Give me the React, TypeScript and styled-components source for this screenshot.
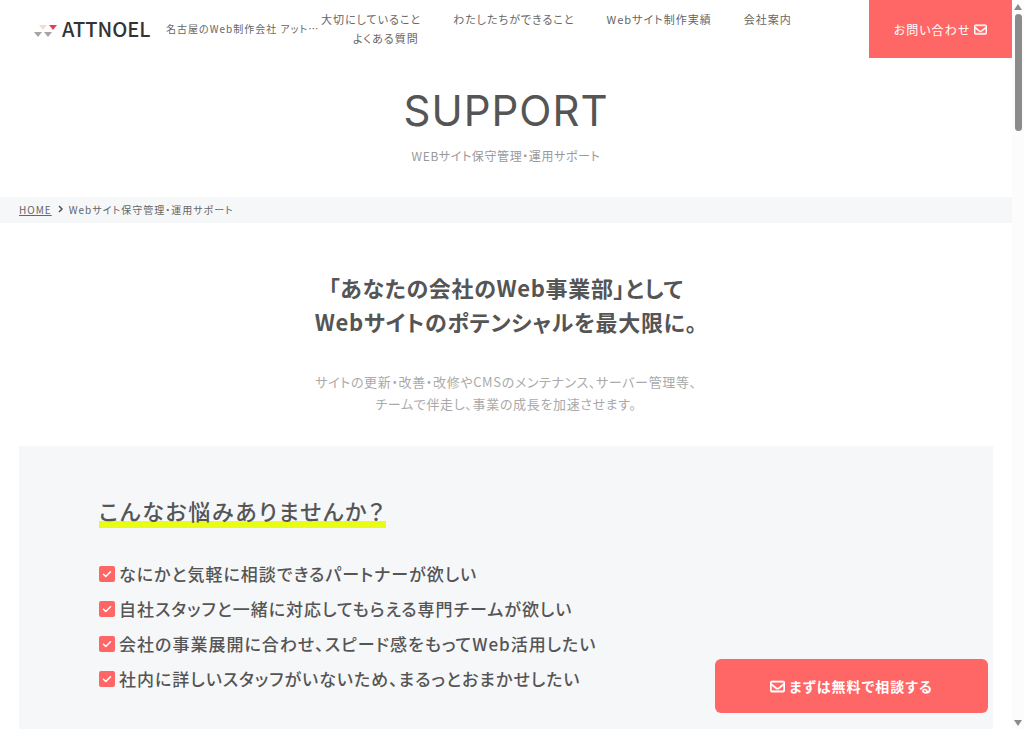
import React from "react";
import styled, { createGlobalStyle } from "styled-components";

const GlobalStyle = createGlobalStyle`
  *, *::before, *::after { box-sizing: border-box; }
  html, body, #root { height: 100%; }
  body {
    margin: 0;
    background: #fff;
    color: #555;
    font-family: "Noto Sans CJK JP", sans-serif;
    font-feature-settings: "palt";
    letter-spacing: 1px;
  }
  h1, h2, h3, p, ul { margin: 0; padding: 0; }
  ul { list-style: none; }
  a { color: inherit; text-decoration: none; }
`;

const Shell = styled.div`
  display: flex;
  height: 100vh;
`;

const Viewport = styled.div`
  flex: 1;
  min-width: 0;
  overflow-y: auto;
  scrollbar-width: none;
`;

const Rail = styled.div`
  flex: none;
  width: 12px;
  display: flex;
  flex-direction: column;
  align-items: center;
  justify-content: space-between;
  padding: 4px 0 3px;
  background: #fcfcfc;
`;

const RailTop = styled.div`
  display: flex;
  flex-direction: column;
  align-items: center;
  gap: 4px;
`;

const Arrow = styled.svg`
  display: block;
  width: 8px;
  height: 6px;
  fill: #8b8b8b;
`;

const Thumb = styled.div`
  width: 7px;
  height: 117px;
  border-radius: 4px;
  background: #8b8b8b;
`;

const Header = styled.header`
  display: flex;
  align-items: center;
  height: 58px;
  padding-left: 34px;
`;

const Brand = styled.a`
  flex: none;
  display: flex;
  align-items: center;
  width: 132px;
  color: #333;
`;

const LogoMark = styled.svg`
  flex: none;
  width: 24px;
  height: 14px;
  margin: 6px 4px 0 0;
`;

const LogoName = styled.span`
  font-size: 20px;
  font-weight: 500;
  line-height: 28px;
  letter-spacing: 0;
`;

const Tagline = styled.p`
  flex: none;
  width: 155px;
  overflow: hidden;
  white-space: nowrap;
  text-overflow: ellipsis;
  font-size: 10px;
  line-height: 18px;
  color: #666;
`;

const Nav = styled.nav`
  flex: 1;
  min-width: 0;
`;

const NavList = styled.ul`
  display: flex;
  flex-wrap: wrap;
`;

const NavItem = styled.li`
  font-size: 11px;
  line-height: 19px;
  color: #666;
  & + & { margin-left: 32px; }
`;

const ContactLink = styled.a`
  flex: none;
  align-self: stretch;
  display: flex;
  align-items: center;
  justify-content: center;
  gap: 4px;
  width: 143px;
  background: #ff6767;
  color: #fff;
  font-size: 12px;
`;

const MailIcon = styled.svg`
  flex: none;
  width: ${(p: { $size: number }) => p.$size}px;
  height: ${(p: { $size: number }) => p.$size}px;
  fill: currentColor;
  stroke: currentColor;
  stroke-width: 18;
`;

const Hero = styled.section`
  padding: 28px 0 31px;
  text-align: center;
`;

const HeroTitle = styled.h1`
  font: 400 42px/50px Inter, sans-serif;
  letter-spacing: 1px;
`;

const HeroSub = styled.p`
  margin-top: 10px;
  font-size: 12px;
  line-height: 20px;
  letter-spacing: 0.05em;
  color: #999;
`;

const Breadcrumb = styled.nav`
  display: flex;
  align-items: center;
  gap: 5px;
  height: 26px;
  padding: 0 19px 2px;
  background: #f5f7f9;
  font-size: 10px;
  color: #666;
  a { text-decoration: underline; }
  svg { width: 7px; height: 8px; fill: none; stroke: #555; stroke-width: 1.5; }
`;

const Intro = styled.section`
  padding: 47px 19px 31px;
  text-align: center;
`;

const IntroTitle = styled.h2`
  font-size: 22px;
  font-weight: 700;
  line-height: 34px;
  letter-spacing: 0.03em;
`;

const IntroText = styled.p`
  margin-top: 33px;
  font-size: 13px;
  line-height: 22px;
  letter-spacing: 0.05em;
  color: #aaa;
`;

const Panel = styled.section`
  margin: 0 19px;
  padding: 48px 80px 80px;
  background: #f5f7f9;
`;

const PanelTitle = styled.h3`
  display: inline-block;
  padding-bottom: 2px;
  font-size: 22px;
  font-weight: 500;
  line-height: 32px;
  letter-spacing: 0.08em;
  background: linear-gradient(#e8fc16, #e8fc16) 0 100% / 100% 7px no-repeat;
`;

const CheckList = styled.ul`
  display: grid;
  gap: 7px;
  margin-top: 32px;
`;

const CheckItem = styled.li`
  display: flex;
  align-items: center;
  gap: 4px;
  font-size: 17px;
  font-weight: 500;
  line-height: 28px;
`;

const CheckIcon = styled.svg`
  flex: none;
  width: 16px;
  height: 16px;
`;

const FloatingCta = styled.a`
  position: fixed;
  right: 36px;
  bottom: 16px;
  display: flex;
  align-items: center;
  justify-content: center;
  gap: 4px;
  width: 273px;
  height: 54px;
  border-radius: 6px;
  background: #ff6767;
  color: #fff;
  font-size: 14px;
  font-weight: 700;
`;

function Mail({ size }: { size: number }) {
  return (
    <MailIcon $size={size} viewBox="0 0 512 512" aria-hidden="true">
      <path d="M64 112c-8.800 0-16 7.200-16 16v22.100L220.500 291.700c20.700 17 50.400 17 71.100 0L464 150.100V128c0-8.800-7.200-16-16-16H64zM48 212.200V384c0 8.800 7.200 16 16 16H448c8.800 0 16-7.200 16-16V212.200L322 328.800c-38.400 31.500-93.700 31.500-132 0L48 212.200zM0 128C0 92.700 28.700 64 64 64H448c35.300 0 64 28.700 64 64V384c0 35.300-28.700 64-64 64H64c-35.300 0-64-28.700-64-64V128z" />
    </MailIcon>
  );
}

const navItems = ["大切にしていること", "わたしたちができること", "Webサイト制作実績", "会社案内", "よくある質問"];

const worries = [
  "なにかと気軽に相談できるパートナーが欲しい",
  "自社スタッフと一緒に対応してもらえる専門チームが欲しい",
  "会社の事業展開に合わせ、スピード感をもってWeb活用したい",
  "社内に詳しいスタッフがいないため、まるっとおまかせしたい",
];

export default function App() {
  return (
    <>
      <GlobalStyle />
      <Shell>
        <Viewport>
          <Header>
            <Brand href="#">
              <LogoMark viewBox="0 0 24 14" aria-hidden="true">
                <path fill="#fbd9d3" d="M5 0h8L9 5z" />
                <path fill="#e5404f" d="M15 0h8l-4 5z" />
                <path fill="#a5a5a5" d="M0 7h8l-4 5zM10 7h8l-4 5z" />
              </LogoMark>
              <LogoName>ATTNOEL</LogoName>
            </Brand>
            <Tagline>名古屋のWeb制作会社 アットノエル</Tagline>
            <Nav>
              <NavList>
                {navItems.map((item) => (
                  <NavItem key={item}>
                    <a href="#">{item}</a>
                  </NavItem>
                ))}
              </NavList>
            </Nav>
            <ContactLink href="#">
              お問い合わせ
              <Mail size={13} />
            </ContactLink>
          </Header>
          <main>
            <Hero>
              <HeroTitle>SUPPORT</HeroTitle>
              <HeroSub>WEBサイト保守管理・運用サポート</HeroSub>
            </Hero>
            <Breadcrumb>
              <a href="#">HOME</a>
              <svg viewBox="0 0 7 8" aria-hidden="true">
                <path d="M2 1l3 3-3 3" />
              </svg>
              <span>Webサイト保守管理・運用サポート</span>
            </Breadcrumb>
            <Intro>
              <IntroTitle>
                「あなたの会社のWeb事業部」として
                <br />
                Webサイトのポテンシャルを最大限に。
              </IntroTitle>
              <IntroText>
                サイトの更新・改善・改修やCMSのメンテナンス、サーバー管理等、
                <br />
                チームで伴走し、事業の成長を加速させます。
              </IntroText>
            </Intro>
            <Panel>
              <PanelTitle>こんなお悩みありませんか？</PanelTitle>
              <CheckList>
                {worries.map((text) => (
                  <CheckItem key={text}>
                    <CheckIcon viewBox="0 0 16 16" aria-hidden="true">
                      <rect width="16" height="16" rx="2" fill="#ff6767" />
                      <path d="M4.500 8.200l2.300 2.300 4.700-4.700" fill="none" stroke="#fff" strokeWidth="1.500" strokeLinecap="round" strokeLinejoin="round" />
                    </CheckIcon>
                    {text}
                  </CheckItem>
                ))}
              </CheckList>
            </Panel>
          </main>
          <FloatingCta href="#">
            <Mail size={15} />
            まずは無料で相談する
          </FloatingCta>
        </Viewport>
        <Rail aria-hidden="true">
          <RailTop>
            <Arrow viewBox="0 0 8 6"><path d="M4 0l4 6H0z" /></Arrow>
            <Thumb />
          </RailTop>
          <Arrow viewBox="0 0 8 6"><path d="M0 0h8L4 6z" /></Arrow>
        </Rail>
      </Shell>
    </>
  );
}
